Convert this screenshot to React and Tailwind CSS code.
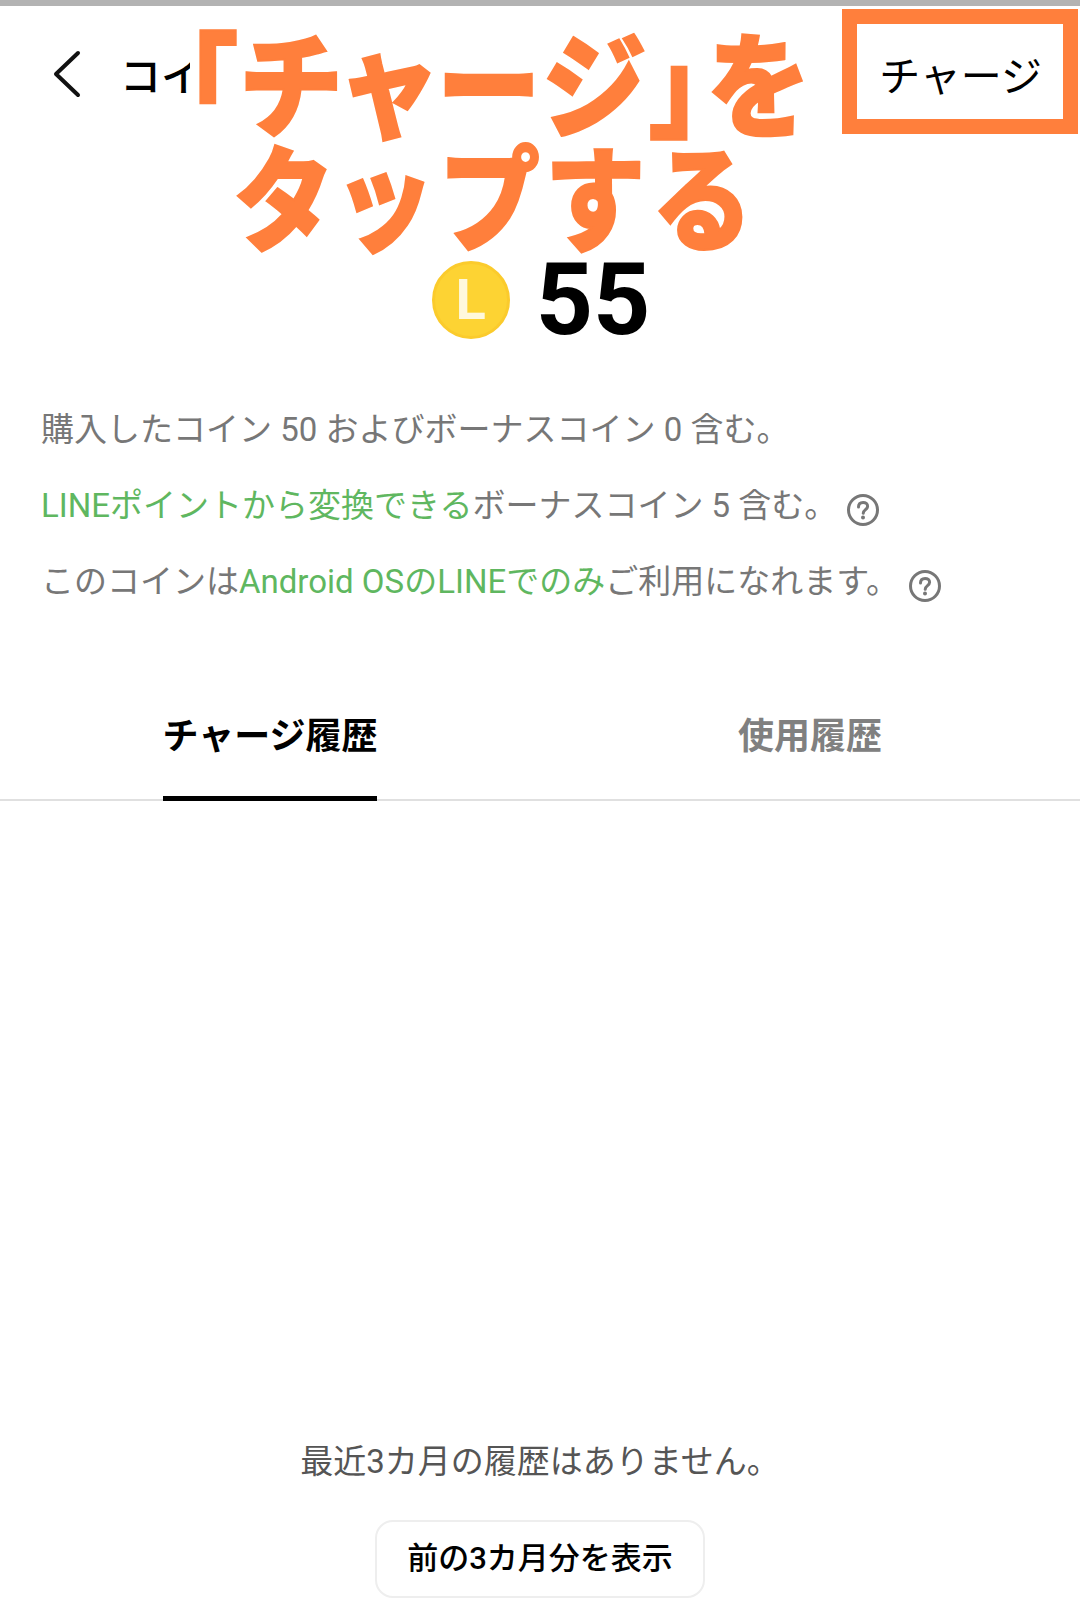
const HelpIcon = () => (
  <svg width="34" height="34" viewBox="0 0 34 34" fill="none" className="ml-[9px] mt-[8px] shrink-0">
    <circle cx="17" cy="17" r="14.5" stroke="#777" strokeWidth="3" />
    <path d="M12.5 14c0-3 2-4.6 4.6-4.6s4.5 1.6 4.5 3.9c0 3.3-4.2 3.4-4.4 7" stroke="#777" strokeWidth="3" strokeLinecap="round" />
    <circle cx="17" cy="24.6" r="2" fill="#777" />
  </svg>
);

const App = () => {
  return (
    <div className="relative w-[1080px] h-[1624px] overflow-hidden bg-white font-['Roboto','Noto_Sans_CJK_JP',sans-serif]">
      <div className="h-[6px] bg-[#b3b3b3]" />

      {/* Header */}
      <div className="flex items-center h-[140px] pl-[52px] pr-[38px]">
        <svg width="30" height="48" viewBox="0 0 30 48" fill="none" className="shrink-0 -mt-[4px]">
          <path d="M26 3 L4 24 L26 45" stroke="#111" strokeWidth="4" strokeLinecap="round" strokeLinejoin="round" />
        </svg>
        {/* the annotation hides the rest of the title */}
        <div className="ml-[38px] mt-[3px] w-[70px] overflow-hidden whitespace-nowrap text-[41px] font-medium text-black">コイン</div>
        <div className="ml-auto mt-[3px] text-[41px] text-black">チャージ</div>
      </div>

      {/* Annotation */}
      <div className="absolute left-[179px] top-[32px] w-[640px] flex flex-col items-center text-[#ff7f3c] text-[112px] leading-[114px] font-black [font-feature-settings:'palt'] [-webkit-text-stroke:2px_#ff7f3c]">
        <div className="whitespace-nowrap tracking-[6px] scale-x-[0.93] scale-y-[1.02]">「チャージ」を</div>
        <div className="whitespace-nowrap tracking-[16px] scale-x-[0.9] scale-y-[1.02]">タップする</div>
      </div>
      <div className="absolute left-[842px] top-[9px] w-[236px] h-[125px] border-[15px] border-[#ff7f3c]" />

      {/* Balance */}
      <div className="flex items-center justify-center h-[120px] mt-[94px] pl-[2px]">
        <div className="flex items-center justify-center w-[78px] h-[78px] rounded-full bg-[#fdd333] border-[3px] border-[#fbcb2c]">
          <span className="text-[56px] leading-none font-bold text-[#fff8dc]">L</span>
        </div>
        <div className="ml-[26px] text-[100px] leading-none font-bold text-black">55</div>
      </div>

      {/* Notes */}
      <div className="mt-[32px] pl-[41px] text-[33px] leading-[76px] text-[#777777]">
        <div className="flex items-center h-[76px] whitespace-pre">購入したコイン 50 およびボーナスコイン 0 含む。</div>
        <div className="flex items-center h-[76px] whitespace-pre">
          <span className="text-[#5fb760]">LINEポイントから変換できる</span>
          <span>ボーナスコイン 5 含む。</span>
          <HelpIcon />
        </div>
        <div className="flex items-center h-[76px] whitespace-pre">
          <span>このコインは</span>
          <span className="text-[#5fb760]">Android OSのLINEでのみ</span>
          <span>ご利用になれます。</span>
          <HelpIcon />
        </div>
      </div>

      {/* Tabs */}
      <div className="grid grid-cols-2 mt-[76px] h-[105px] border-b-2 border-[#e0e0e0] text-[36px] font-bold">
        <div className="flex justify-center">
          <div className="h-[105px] pt-[14px] border-b-[5px] border-black text-black leading-[54px]">チャージ履歴</div>
        </div>
        <div className="flex justify-center">
          <div className="pt-[14px] text-[#808080] leading-[54px]">使用履歴</div>
        </div>
      </div>

      {/* Empty state */}
      <div className="flex flex-col items-center mt-[636px]">
        <div className="text-[33px] leading-[50px] text-[#555555]">最近3カ月の履歴はありません。</div>
        <button className="mt-[33px] w-[330px] h-[78px] rounded-[18px] border-2 border-[#eeeeee] bg-white text-[31px] font-medium text-black">
          前の3カ月分を表示
        </button>
      </div>
    </div>
  );
};

export default App;
